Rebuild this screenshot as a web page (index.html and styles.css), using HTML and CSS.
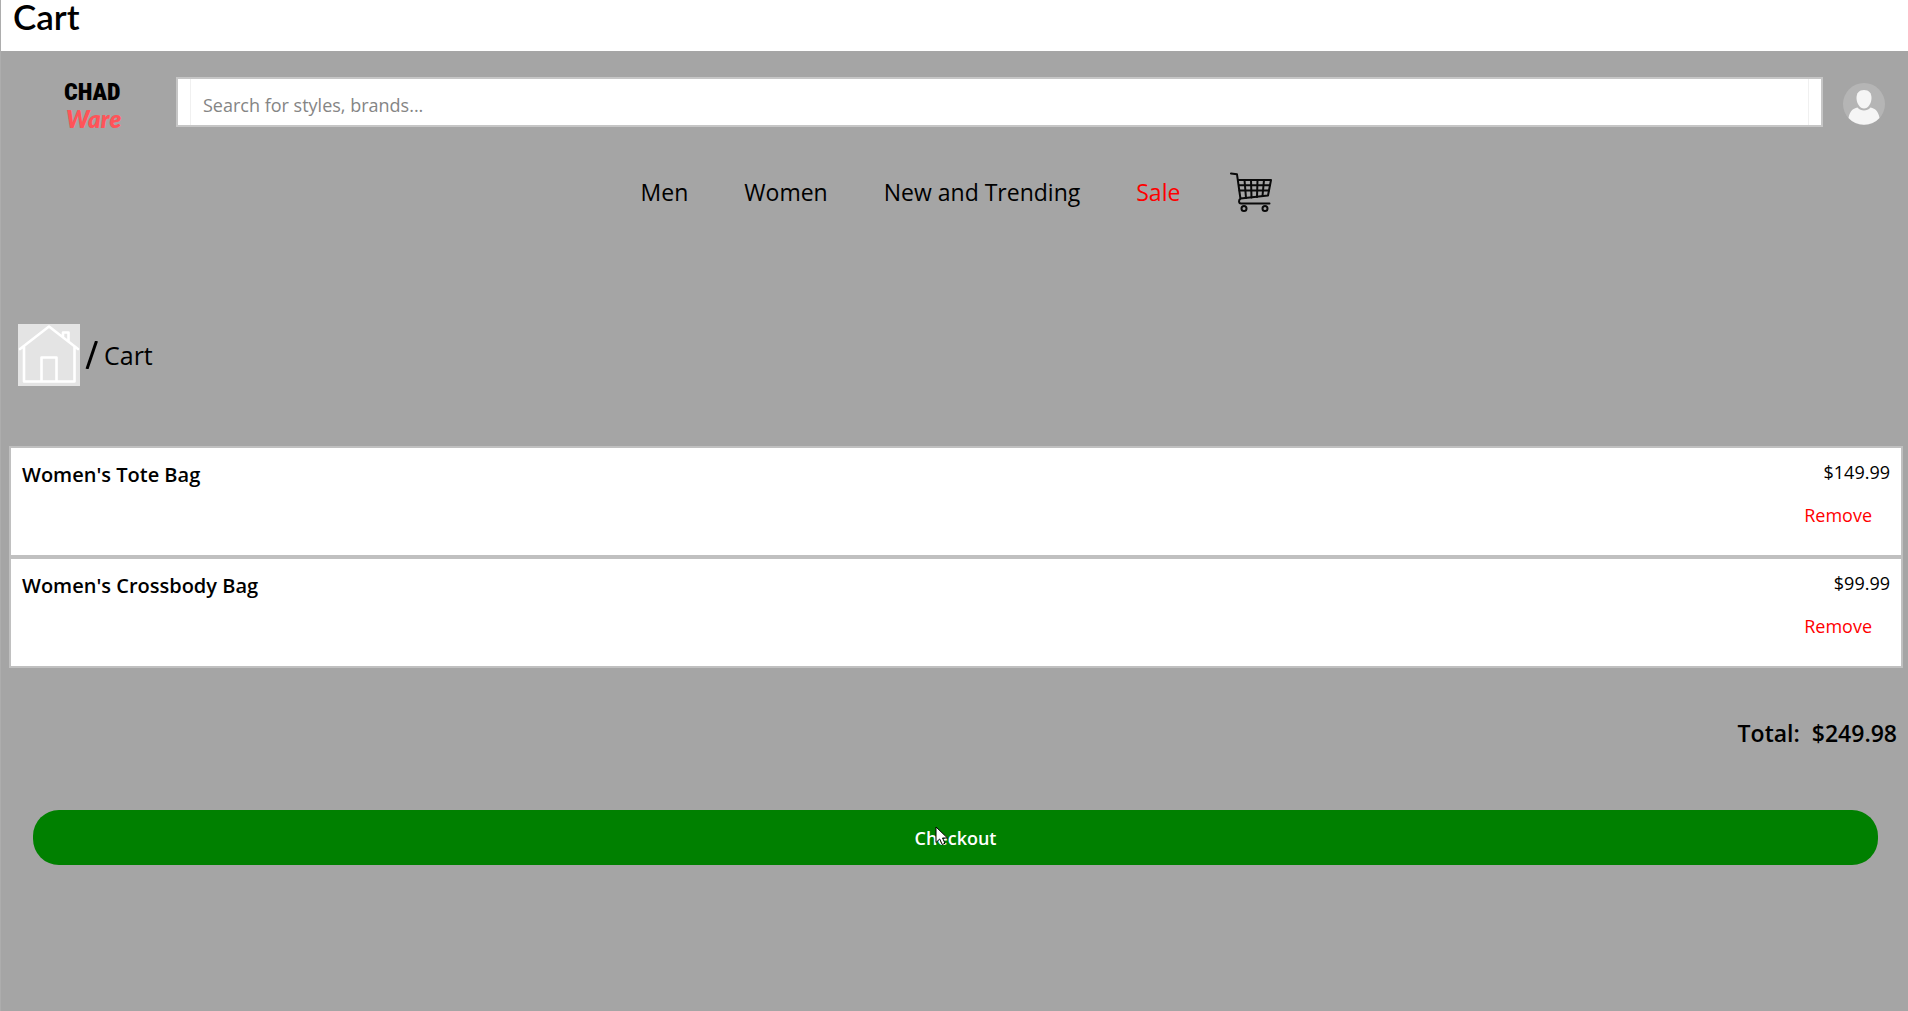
FILE: index.html
```html
<!DOCTYPE html>
<html lang="en">
<head>
<meta charset="utf-8">
<title>Cart</title>
<meta name="viewport" content="width=device-width, initial-scale=1">
<link rel="stylesheet" href="styles.css">
</head>
<body>
<header class="titlebar"><h1 class="title">Cart</h1></header>
<div class="page">
  <div class="topbar">
    <a class="logo" href="#" aria-label="Chad Ware home">
      <span class="logo-top">CHAD</span>
      <span class="logo-bottom">Ware</span>
    </a>
    <form class="search">
      <input class="search-input" type="search" placeholder="Search for styles, brands..." aria-label="Search for styles, brands">
    </form>
    <a class="profile" href="#" aria-label="Profile">
      <svg viewBox="0 0 42 42" width="42" height="42">
        <circle cx="21" cy="21" r="21" fill="#b5b5b5"/>
        <path d="M21 7c5 0 7.500 3 7.500 8 0 5.500-3.500 10.500-7.500 10.500s-7.500-5-7.500-10.500c0-5 2.500-8 7.500-8z" fill="#f5f5f5"/>
        <path d="M14.500 24.500c2 2.300 4 3 6.500 3s4.500-.7 6.500-3c5 .8 8 4.500 9 10.500a21 21 0 0 1-31 0c1-6 4-9.700 9-10.500z" fill="#f5f5f5"/>
      </svg>
    </a>
  </div>
  <nav class="nav" aria-label="Main">
    <a href="#">Men</a>
    <a href="#">Women</a>
    <a href="#">New and Trending</a>
    <a class="sale" href="#">Sale</a>
    <a class="cart-link" href="#" aria-label="Cart">
      <svg viewBox="0 0 42 40" width="42" height="40" fill="none" stroke="#0a0a0a" stroke-linecap="round" stroke-linejoin="round">
        <path d="M1 1.500l6 .8L10.500 27M8 8h33l-3 15.500L10.500 26.500C8.500 28 8.500 31.500 11 31.500h28.500" stroke-width="2"/>
        <path d="M9 13.200h31M9.500 18.500h29.500M14.500 8l1.500 18M21 8l.5 17.500M27.500 8L27 25M34 8l-1.500 16" stroke-width="2"/>
        <circle cx="14" cy="36.500" r="2.500" stroke-width="2"/>
        <circle cx="35" cy="36.500" r="2.500" stroke-width="2"/>
      </svg>
    </a>
  </nav>
  <nav class="crumbs" aria-label="Breadcrumb">
    <a class="home" href="#" aria-label="Home">
      <svg viewBox="0 0 62 62" width="62" height="62" fill="none" stroke="#fff" stroke-width="2.600" stroke-linecap="round" stroke-linejoin="round">
        <path d="M2 25L31 2.500 60 25M6 22.500V57.500h50.500V22.500M23.500 57V33.500h15V57M45 13V8.500h5.500V17"/>
      </svg>
    </a>
    <svg class="slash" viewBox="0 0 14 28" width="14" height="28" aria-hidden="true"><path d="M11.500 0L2 28" stroke="#000" stroke-width="3"/></svg>
    <span>Cart</span>
  </nav>
  <main>
    <ul class="items">
      <li class="item">
        <h2 class="item-name">Women's Tote Bag</h2>
        <div class="item-side"><span>$149.99</span><button class="remove" type="button">Remove</button></div>
      </li>
      <li class="item">
        <h2 class="item-name">Women's Crossbody Bag</h2>
        <div class="item-side"><span>$99.99</span><button class="remove" type="button">Remove</button></div>
      </li>
    </ul>
    <p class="total"><span>Total:</span><span>$249.98</span></p>
    <button class="checkout" type="button">Checkout
      <svg class="pointer" viewBox="0 0 14 20" width="14" height="20" aria-hidden="true"><path d="M1 1v15.500l3.700-3.500 2.500 5.500 2.800-1.200-2.500-5.300h5z" fill="#fff" stroke="#000"/></svg>
    </button>
  </main>
</div>
</body>
</html>
```
FILE: styles.css
```css
* { box-sizing: border-box; }

body {
  margin: 0;
  min-height: 100vh;
  display: flex;
  flex-direction: column;
  border-left: 1px solid #adadad;
  background: #a5a5a5;
  color: #000;
  font-family: "Open Sans", "Noto Sans", sans-serif;
  font-size: 18px;
  line-height: 24px;
}

a { color: inherit; text-decoration: none; }
svg { display: block; }

.titlebar { height: 51px; padding: 0 12px; background: #fff; }
.title {
  margin: 0;
  font-family: Lato, sans-serif;
  font-size: 35px;
  font-weight: 600;
  line-height: 32px;
}

.page { flex: 1; }

.topbar { display: flex; align-items: center; padding: 24px 23px 24px 63px; }
.logo { display: flex; flex-direction: column; width: 112px; }
.logo-top {
  font-family: "Roboto Condensed", Roboto, sans-serif;
  font-size: 24px;
  font-weight: 900;
  line-height: 34px;
}
.logo-bottom {
  padding-left: 2px;
  color: #ff5459;
  font-family: Lato, sans-serif;
  font-size: 24px;
  font-style: italic;
  font-weight: 800;
  line-height: 20px;
}
.search {
  flex: 1;
  height: 50px;
  padding: 0 12px;
  border: 2px solid #c6c6c6;
  background: #fff;
}
.search-input {
  width: 100%;
  height: 100%;
  padding: 6px 12px 0;
  border: solid #f0f0f0;
  border-width: 0 1px;
  background: #fff;
  font: inherit;
  outline: none;
}
.search-input::placeholder { color: #858585; opacity: 1; }
.profile { margin: 4px 0 0 20px; }

.nav {
  display: flex;
  align-items: center;
  justify-content: center;
  gap: 56px;
  margin-top: 19px;
  padding-left: 4px;
  font-size: 23px;
}
.sale { color: #f00; }
.cart-link { margin-left: -6px; }

.crumbs { display: flex; align-items: center; gap: 5px; margin: 112px 0 0 17px; font-size: 25px; }
.home { background: #e4e4e4; }

.items { margin: 60px 5px 0 8px; padding: 0; list-style: none; }
.item {
  display: flex;
  justify-content: space-between;
  height: 111px;
  padding: 12px 11px;
  border: 2px solid #c0c0c0;
  background: #fff;
}
.item-name { margin: 0; font-size: 20px; font-weight: 600; line-height: 30px; }
.item-side { display: flex; flex-direction: column; align-items: flex-end; gap: 19px; }
.remove {
  padding: 0 18px;
  border: 0;
  background: none;
  color: #f00;
  font: inherit;
}

.total {
  display: flex;
  justify-content: flex-end;
  gap: 12px;
  margin: 49px 11px 0;
  font-size: 23px;
  font-weight: 600;
  line-height: 32px;
}
.checkout {
  position: relative;
  display: block;
  width: calc(100% - 62px);
  height: 55px;
  margin: 61px 30px 0 32px;
  border: 0;
  border-radius: 26px;
  background: #008000;
  color: #fff;
  font: inherit;
  font-weight: 600;
}
.pointer { position: absolute; top: 16px; left: calc(50% - 21px); }
```
